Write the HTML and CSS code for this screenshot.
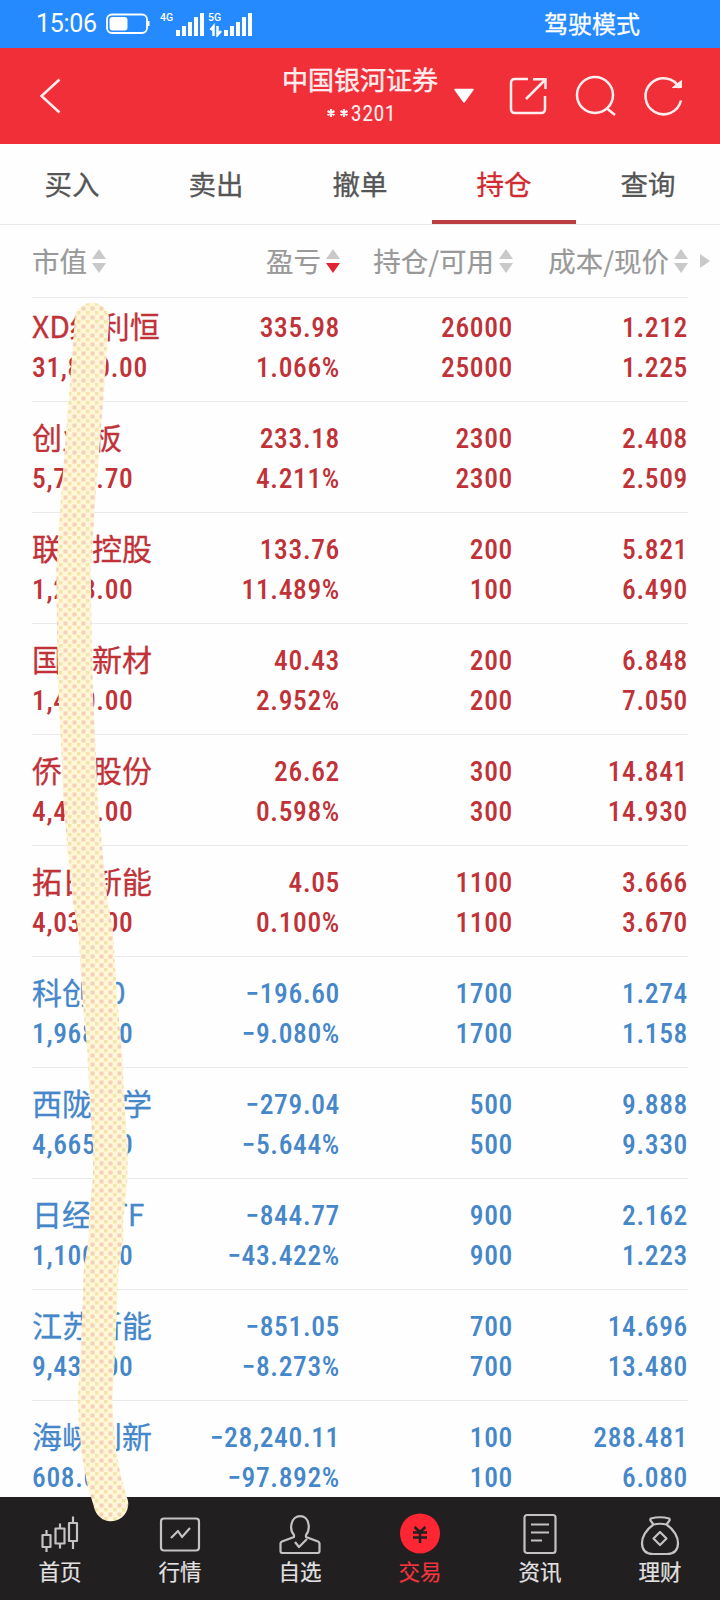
FILE: index.html
```html
<!DOCTYPE html>
<html lang="zh-CN">
<head>
<meta charset="utf-8">
<title>持仓</title>
<link rel="stylesheet" href="styles.css">
</head>
<body>
<div class="screen">
  <div class="status">
    <span class="clock">15:06</span>
    <svg class="battery" width="46" height="22" viewBox="0 0 46 22"><rect x="1" y="1.500" width="40" height="18.500" rx="5" fill="none" stroke="#fff" stroke-width="1.800"/><rect x="3.500" y="4" width="18" height="13.500" rx="3" fill="#fff"/><path d="M41.500 8h2v5h-2z" fill="#fff"/></svg>
    <svg class="signals" width="96" height="26" viewBox="0 0 96 26" fill="#fff"><text x="0" y="10">4G</text><text x="48" y="10">5G</text><path d="M16 19h4v6h-4zM22 15h4v10h-4zM28 11h4v14h-4zM34 6h4v19h-4zM40 2h4v23h-4zM64 19h4v6h-4zM70 15h4v10h-4zM76 11h4v14h-4zM82 6h4v19h-4zM88 2h4v23h-4z"/><path d="M53.500 25V15.500L50.500 19M57.500 15v9l3.500-4" fill="none" stroke="#fff" stroke-width="2.500"/></svg>
    <span class="mode">驾驶模式</span>
  </div>
  <header class="header">
    <svg class="back" width="24" height="40" viewBox="0 0 24 40"><path d="M21.500 3.500L3.500 20l18 16.500" fill="none" stroke="#fee" stroke-width="2.500"/></svg>
    <div class="account"><div class="broker">中国银河证券</div><div class="number"><svg width="24" height="14" viewBox="0 0 24 14"><path d="M5 2v8M1.500 4l7 4M8.500 4l-7 4M18 2v8M14.500 4l7 4M21.500 4l-7 4" stroke="#fee" stroke-width="2.200"/></svg>3201</div></div>
    <svg class="tools" width="240" height="48" viewBox="0 0 240 48" fill="none" stroke="#fee" stroke-width="2.500"><path d="M4 17.500h18L13 30z" fill="#fff" stroke="#fff" stroke-width="1.500" stroke-linejoin="round"/><path d="M77 7H64q-4 0-4 4v26q0 4 4 4h26q4 0 4-4V24M75 27L94 8M82 7.300h12.500V17"/><circle cx="144" cy="23" r="18"/><path d="M156 36.500l8 6.500"/><path d="M228.500 16A18 18 0 1 0 230 28.500"/><path d="M221.500 15.500h9V8.500z" fill="#fee" stroke-width="1"/></svg>
  </header>
  <nav class="tabs"><span>买入</span><span>卖出</span><span>撤单</span><span class="active">持仓</span><span>查询</span></nav>
  <div class="cols head">
    <span>市值<i class="sort"></i></span><span>盈亏<i class="sort down"></i></span><span>持仓/可用<i class="sort"></i></span><span>成本/现价<i class="sort"></i><i class="more"></i></span>
  </div>
  <main class="list">
    <div class="cols row"><div><b>XD红利恒</b>31,850.00</div><div>335.98<br>1.066%</div><div>26000<br>25000</div><div>1.212<br>1.225</div></div>
    <div class="cols row"><div><b>创业板</b>5,770.70</div><div>233.18<br>4.211%</div><div>2300<br>2300</div><div>2.408<br>2.509</div></div>
    <div class="cols row"><div><b>联美控股</b>1,298.00</div><div>133.76<br>11.489%</div><div>200<br>100</div><div>5.821<br>6.490</div></div>
    <div class="cols row"><div><b>国瓷新材</b>1,410.00</div><div>40.43<br>2.952%</div><div>200<br>200</div><div>6.848<br>7.050</div></div>
    <div class="cols row"><div><b>侨银股份</b>4,479.00</div><div>26.62<br>0.598%</div><div>300<br>300</div><div>14.841<br>14.930</div></div>
    <div class="cols row"><div><b>拓日新能</b>4,037.00</div><div>4.05<br>0.100%</div><div>1100<br>1100</div><div>3.666<br>3.670</div></div>
    <div class="cols row loss"><div><b>科创50</b>1,968.60</div><div>−196.60<br>−9.080%</div><div>1700<br>1700</div><div>1.274<br>1.158</div></div>
    <div class="cols row loss"><div><b>西陇科学</b>4,665.00</div><div>−279.04<br>−5.644%</div><div>500<br>500</div><div>9.888<br>9.330</div></div>
    <div class="cols row loss"><div><b>日经ETF</b>1,100.70</div><div>−844.77<br>−43.422%</div><div>900<br>900</div><div>2.162<br>1.223</div></div>
    <div class="cols row loss"><div><b>江苏新能</b>9,436.00</div><div>−851.05<br>−8.273%</div><div>700<br>700</div><div>14.696<br>13.480</div></div>
    <div class="cols row loss"><div><b>海峡创新</b>608.00</div><div>−28,240.11<br>−97.892%</div><div>100<br>100</div><div>288.481<br>6.080</div></div>
  </main>
  <nav class="bottom">
    <a><svg width="44" height="44" viewBox="0 0 44 44"><path d="M4.500 22h8v12h-8zM8.500 22v-5M8.500 34v5M17.500 15.500h9v15h-9zM22 15.500v-5M22 30.500v5M31 10h8v18h-8zM35 10V3.500M35 28v8"/></svg>首页</a>
    <a><svg width="44" height="44" viewBox="0 0 44 44"><rect x="3" y="5.500" width="38" height="32" rx="3"/><path d="M13 25l7-7 4 6 8-9"/></svg>行情</a>
    <a><svg width="44" height="44" viewBox="0 0 44 44"><path d="M16 22C12 18 13 14 13.500 11c2-10.500 15.500-10.500 17 0 .5 3 1 7-2.500 11v2l12 4.500q1.500.6 1.500 2V38q0 2-2 2h-35q-2 0-2-2v-7.500q0-1.400 1.500-2L16 24z"/><path d="M17 29l4 5 8-8"/></svg>自选</a>
    <a class="on"><svg width="44" height="44" viewBox="0 0 44 44"><circle cx="22" cy="20.500" r="20" fill="#fe2632" stroke="none"/><path d="M16.500 14l5.500 5 5.500-5M15 19.500h14M15 24.500h14M22 19v11" stroke="#211f20" stroke-width="2.500"/></svg>交易</a>
    <a><svg width="44" height="44" viewBox="0 0 44 44"><rect x="6.500" y="2" width="31" height="38" rx="2.500"/><path d="M13 11.500h18M13 19.500h18M13 27.500h11"/></svg>资讯</a>
    <a><svg width="44" height="44" viewBox="0 0 44 44"><path d="M15.500 11.500C13.500 8.500 11 7 13 5.500Q22 3 31 5.500c2 1.500-.5 3-2.500 6Q22 10 15.500 11.500C8 16.500 4 24 4 30c0 8 5 11 11 11h14c6 0 11-3 11-11 0-6-4-13.500-11.500-18.500"/><path d="M22 19l6.500 6.500L22 32l-6.500-6.500z"/></svg>理财</a>
  </nav>
  <svg class="brush" width="720" height="1600" viewBox="0 0 720 1600">
    <defs><pattern id="weave" width="9" height="9" patternUnits="userSpaceOnUse"><path d="M0 0h9v9H0z" fill="#fff7d8"/><path d="M.5.500h4v4H.5z" fill="#f3d2b8"/><path d="M5 5h3.500v3.500H5z" fill="#f3e4ac"/></pattern></defs>
    <path d="M92 320L86 400 82 450 78 500 73.500 570 74.500 650 76 700 78.500 750 80.500 800 85 850 90 900 95.500 930 100 1000 104.500 1050 107 1100 110.500 1150 110 1180 106 1220 106 1240 101 1270 100 1300 98 1350 95 1400 96 1420 98.500 1450 104 1480 111 1504" fill="none" stroke="url(#weave)" stroke-width="34.500" stroke-linecap="round" stroke-linejoin="round"/>
  </svg>
</div>
</body>
</html>
```
FILE: styles.css
```css
* { box-sizing: border-box; }
body { margin: 0; background: #fefefe; font-family: "Noto Sans CJK SC", sans-serif; }
.screen { position: relative; width: 720px; height: 1600px; overflow: hidden; display: flex; flex-direction: column; }
.status { flex: none; height: 48px; background: #248afd; color: #fff; display: flex; align-items: center; padding: 0 80px 0 36px; }
.clock { font: 450 25px/50px Roboto, sans-serif; width: 70px; white-space: nowrap; letter-spacing: -0.300px; }
.signals { margin-left: 8px; }
.signals text { font: 500 10.500px Roboto, sans-serif; }
.mode { margin-left: auto; font-size: 24px; line-height: 46px; padding-bottom: 2px; -webkit-text-stroke: 0.300px; }
.header { flex: none; height: 96px; background: #f12f39; color: #fee; display: flex; align-items: center; padding: 0 29px 0 38px; }
.account { margin-left: 218px; width: 160px; text-align: center; white-space: nowrap; }
.broker { font-size: 26px; line-height: 30px; font-weight: 400; -webkit-text-stroke: 0.400px; }
.number { font: 450 22px/28px Roboto, sans-serif; font-stretch: 85%; letter-spacing: 0.500px; padding-top: 6px; padding-left: 2px; }
.number svg { margin-right: 1px; }
.tools { margin-left: auto; flex: none; }
.tabs { flex: none; height: 81px; display: flex; border-bottom: 1px solid #e9e9e9; }
.tabs span { flex: 1; text-align: center; font-size: 27.500px; line-height: 78px; color: #555; border-bottom: 4px solid transparent; -webkit-text-stroke: 0.300px; }
.tabs .active { color: #d02a30; border-color: #bd3e42; }
.cols { display: grid; grid-template-columns: 150px 158px 173px 175px; margin: 0 32px; text-align: right; border-bottom: 1px solid #e9e9e9; }
.cols > :first-child { text-align: left; }
.head { flex: none; height: 73px; font-size: 27.500px; line-height: 68px; color: #999; white-space: nowrap; -webkit-text-stroke: 0.200px; }
.head span { position: relative; display: flex; align-items: center; justify-content: flex-end; height: 70px; }
.head span:first-child { justify-content: flex-start; }
.sort { position: relative; top: 1px; width: 14px; height: 24px; margin-left: 5px; display: flex; flex-direction: column; justify-content: space-between; }
.sort::before, .sort::after { content: ""; border: 7px solid transparent; border-top: 0; border-bottom: 10px solid #c9c9c9; }
.sort::after { border-bottom: 0; border-top: 10px solid #c9c9c9; }
.sort.down::after { border-top-color: #e02431; }
.more { position: absolute; left: 187px; top: 29px; border: 7px solid transparent; border-left: 10px solid #c9c9c9; border-right: 0; }
.list { flex: 1; min-height: 0; overflow: hidden; }
.row { height: 111px; padding-top: 17px; font: 460 27.500px/40px Roboto, "Noto Sans CJK SC", sans-serif; font-stretch: 86%; letter-spacing: 0.650px; color: #c03238; white-space: nowrap; }
.row:first-child { height: 104px; padding-top: 10px; }
.row b { display: block; font: 400 30px/34px "Noto Sans CJK SC", sans-serif; letter-spacing: 0; height: 40px; -webkit-text-stroke: 0.300px; }
.row.loss { color: #4587c9; }
.bottom { flex: none; height: 103px; background: #211f20; display: grid; grid-template-columns: repeat(6, 120px); }
.bottom a { display: flex; flex-direction: column; align-items: center; padding-top: 16px; font-size: 21.500px; line-height: 27px; color: #e3e1e2; -webkit-text-stroke: 0.200px; }
.bottom svg { fill: none; stroke: #c4c2c3; stroke-width: 2.200; stroke-linejoin: round; }
.bottom .on { color: #f4343e; }
.brush { position: absolute; left: 0; top: 0; pointer-events: none; }
```
